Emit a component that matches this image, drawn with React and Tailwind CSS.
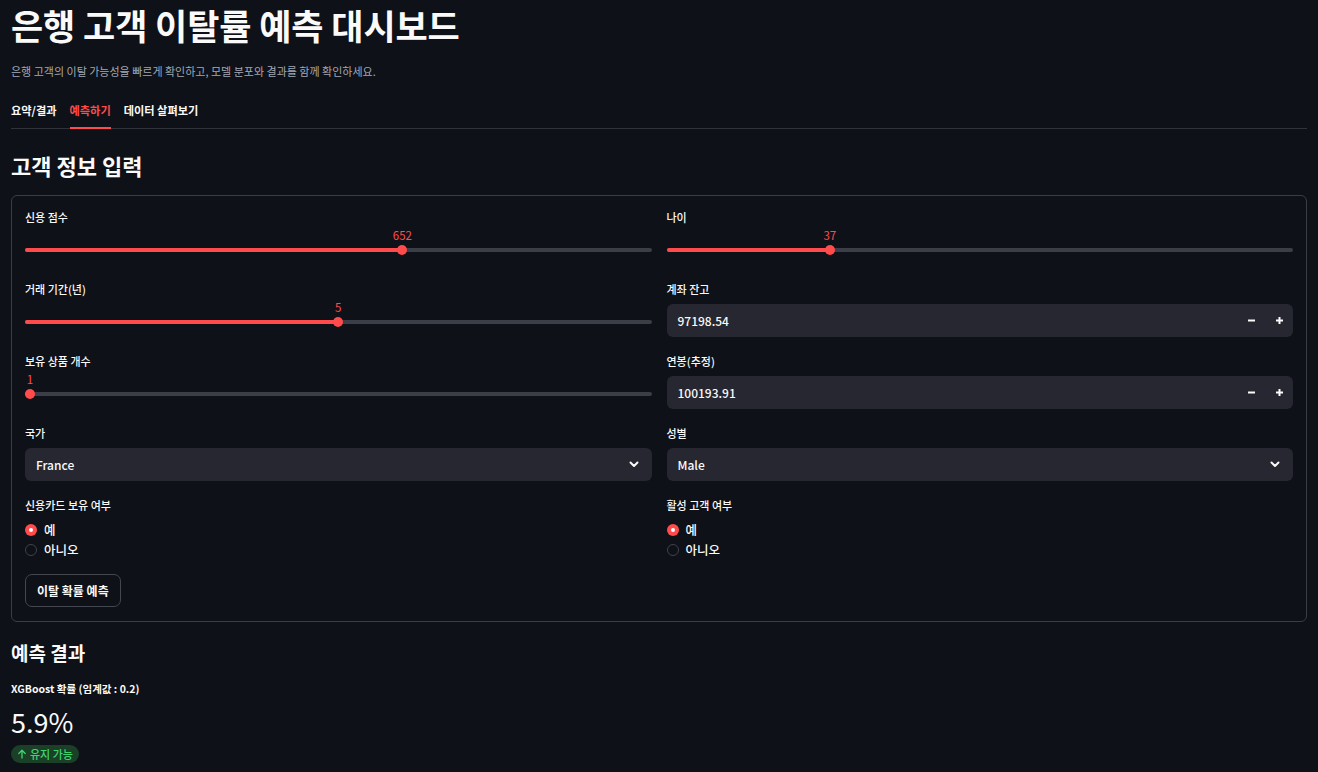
import React from "react";

const RED = "#ff4b4b";

const Label = ({ children }) => (
    <div className="h-[14px] leading-[14px] mb-[8px] text-[11px] font-medium text-[#fafafa]">{children}</div>
);

const Slider = ({ label, value, min, max }) => {
    const pct = (value - min) / (max - min);
    const center = `calc(5px + ${pct} * (100% - 10px))`;
    return (
        <div>
            <Label>{label}</Label>
            <div className="relative h-[33px]">
                <div className="absolute left-0 right-0 top-[16px] h-[4px] rounded-full bg-[#3b3e47]" />
                <div className="absolute left-0 top-[16px] h-[4px] rounded-full" style={{ width: center, background: RED }} />
                <div
                    className="absolute top-[13px] w-[10px] h-[10px] -translate-x-1/2 rounded-full bg-[#ff4b4b]"
                    style={{ left: center }}
                />
                <div
                    className="absolute top-[-4px] -translate-x-1/2 text-[11.5px] leading-[14px] text-[#ff4b4b]"
                    style={{ left: center }}
                >
                    {value}
                </div>
            </div>
        </div>
    );
};

const NumberInput = ({ label, value }) => (
    <div>
        <Label>{label}</Label>
        <div className="h-[33px] rounded-[6px] bg-[#262730] flex items-center">
            <div className="flex-1 pl-[11px] text-[12px] font-medium text-[#fafafa]">{value}</div>
            <button className="w-[28px] h-full flex items-center justify-center">
                <svg width="9" height="9" viewBox="0 0 9 9">
                    <path d="M1 4.5h7" stroke="#fafafa" strokeWidth="2" />
                </svg>
            </button>
            <button className="w-[28px] h-full flex items-center justify-center">
                <svg width="9" height="9" viewBox="0 0 9 9">
                    <path d="M1 4.5h7M4.5 1v7" stroke="#fafafa" strokeWidth="2" />
                </svg>
            </button>
        </div>
    </div>
);

const Select = ({ label, value }) => (
    <div>
        <Label>{label}</Label>
        <div className="h-[33px] rounded-[6px] bg-[#262730] flex items-center pl-[11px] pr-[13px]">
            <div className="flex-1 text-[12px] font-medium text-[#fafafa]">{value}</div>
            <svg width="10" height="7" viewBox="0 0 10 7">
                <path d="M1.5 1.5L5 5l3.5-3.5" fill="none" stroke="#fafafa" strokeWidth="2" strokeLinecap="round" strokeLinejoin="round" />
            </svg>
        </div>
    </div>
);

const Radio = ({ checked, children }) => (
    <div className="flex items-center h-[20px] gap-[7px]">
        {checked ? (
            <span className="w-[12px] h-[12px] rounded-full bg-[#ff4b4b] flex items-center justify-center">
                <span className="w-[4px] h-[4px] rounded-full bg-white" />
            </span>
        ) : (
            <span className="w-[12px] h-[12px] rounded-full border border-[#40434c] bg-[#0e1117]" />
        )}
        <span className="text-[12.5px] font-medium text-[#fafafa]">{children}</span>
    </div>
);

const RadioGroup = ({ label }) => (
    <div>
        <Label>{label}</Label>
        <div className="mt-[1px]">
            <Radio checked>예</Radio>
            <Radio>아니오</Radio>
        </div>
    </div>
);

export default function App() {
    return (
        <div className="min-h-screen bg-[#0e1117] text-[#fafafa] px-[11px] font-['Noto_Sans_CJK_KR','Noto_Sans',sans-serif]">
            <h1 className="h-[49px] leading-[49px] text-[35px] font-bold tracking-[-0.1px]">은행 고객 이탈률 예측 대시보드</h1>
            <p className="mt-[14px] h-[16px] leading-[16px] text-[11px] text-[#a3a8b4]">
                은행 고객의 이탈 가능성을 빠르게 확인하고, 모델 분포와 결과를 함께 확인하세요.
            </p>

            <div className="mt-[17px] flex gap-[13px] border-b border-[#31333b]">
                <div className="pt-[6px] pb-[9px] leading-[16px] text-[11.2px] font-semibold border-b-2 border-transparent -mb-px">요약/결과</div>
                <div className="pt-[6px] pb-[9px] leading-[16px] text-[11.2px] font-semibold border-b-2 border-[#ff4b4b] text-[#ff4b4b] -mb-px">예측하기</div>
                <div className="pt-[6px] pb-[9px] leading-[16px] text-[11.2px] font-semibold border-b-2 border-transparent -mb-px">데이터 살펴보기</div>
            </div>

            <h2 className="mt-[22px] h-[28px] leading-[28px] text-[22px] font-bold">고객 정보 입력</h2>

            <div className="mt-[16px] border border-[#3a3d44] rounded-[6px] px-[13px] pt-[14px] pb-[14px]">
                <div className="grid grid-cols-2 gap-x-[15px] gap-y-[17px]">
                    <Slider label="신용 점수" value={652} min={350} max={850} />
                    <Slider label="나이" value={37} min={18} max={92} />
                    <Slider label="거래 기간(년)" value={5} min={0} max={10} />
                    <NumberInput label="계좌 잔고" value="97198.54" />
                    <Slider label="보유 상품 개수" value={1} min={1} max={4} />
                    <NumberInput label="연봉(추정)" value="100193.91" />
                    <Select label="국가" value="France" />
                    <Select label="성별" value="Male" />
                    <RadioGroup label="신용카드 보유 여부" />
                    <RadioGroup label="활성 고객 여부" />
                </div>
                <button className="mt-[14px] h-[33px] px-[11px] rounded-[7px] border border-[#44474f] text-[12px] font-semibold text-[#fafafa]">
                    이탈 확률 예측
                </button>
            </div>

            <h3 className="mt-[18px] h-[26px] leading-[26px] text-[19px] font-bold">예측 결과</h3>
            <div className="mt-[16px] h-[14px] leading-[14px] text-[10.5px] font-semibold">XGBoost 확률 (임계값 : 0.2)</div>
            <div className="mt-[8px] h-[36px] leading-[36px] text-[27px]">5.9%</div>
            <div className="mt-[5px] inline-flex items-center gap-[3px] h-[18px] px-[6px] rounded-full bg-[#1b4028] text-[#3dd56d] text-[11px] font-medium">
                <svg width="10" height="10" viewBox="0 0 10 10">
                    <path d="M5 9V1.5M1.8 4.5L5 1.3l3.2 3.2" fill="none" stroke="#3dd56d" strokeWidth="1.3" strokeLinecap="round" strokeLinejoin="round" />
                </svg>
                유지 가능
            </div>
        </div>
    );
}
